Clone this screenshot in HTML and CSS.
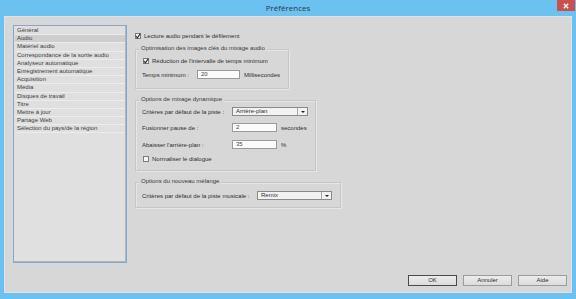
FILE: index.html
```html
<!DOCTYPE html>
<html lang="fr">
<head>
<meta charset="utf-8">
<title>Préférences</title>
<link rel="stylesheet" href="styles.css">
</head>
<body>
<div class="window">
  <div class="titlebar">
    <span class="title">Préférences</span>
    <span class="close"><svg width="6" height="6" viewBox="0 0 6 6"><path d="M0.8 0.8 L5.2 5.2 M5.2 0.8 L0.8 5.2" stroke="#fff" stroke-width="1.3"/></svg></span>
  </div>
  <div class="client">
    <div class="main">
      <ul class="nav">
        <li>Général</li>
        <li class="sel">Audio</li>
        <li>Matériel audio</li>
        <li>Correspondance de la sortie audio</li>
        <li>Analyseur automatique</li>
        <li>Enregistrement automatique</li>
        <li>Acquisition</li>
        <li>Média</li>
        <li>Disques de travail</li>
        <li>Titre</li>
        <li>Mettre à jour</li>
        <li>Partage Web</li>
        <li>Sélection du pays/de la région</li>
      </ul>
      <div class="panel">
        <div class="check top-check"><span class="box on"><svg width="6" height="6" viewBox="0 0 6 6"><path d="M0.8 3 L2.4 4.8 L5.3 0.8" fill="none" stroke="#222" stroke-width="1.1"/></svg></span>Lecture audio pendant le défilement</div>

        <div class="group g1">
          <div class="legend">Optimisation des images clés du mixage audio</div>
          <div class="check r1"><span class="box on"><svg width="6" height="6" viewBox="0 0 6 6"><path d="M0.8 3 L2.4 4.8 L5.3 0.8" fill="none" stroke="#222" stroke-width="1.1"/></svg></span>Réduction de l'intervalle de temps minimum</div>
          <div class="row r2"><span class="lbl l1">Temps minimum :</span><span class="input w43">20</span><span class="unit">Millisecondes</span></div>
        </div>

        <div class="group g2">
          <div class="legend">Options de mixage dynamique</div>
          <div class="row r-sel"><span class="lbl l2">Critères par défaut de la piste :</span><span class="select w76"><span class="val">Arrière-plan</span><span class="arrow"></span></span></div>
          <div class="row r-in1"><span class="lbl l2">Fusionner pause de :</span><span class="input w45">2</span><span class="unit">secondes</span></div>
          <div class="row r-in2"><span class="lbl l2">Abaisser l'arrière-plan :</span><span class="input w45">35</span><span class="unit">%</span></div>
          <div class="check r-chk"><span class="box"></span>Normaliser le dialogue</div>
        </div>

        <div class="group g3">
          <div class="legend">Options du nouveau mélange</div>
          <div class="row r-sel3"><span class="lbl l3">Critères par défaut de la piste musicale :</span><span class="select w75"><span class="val">Remix</span><span class="arrow"></span></span></div>
        </div>
      </div>
    </div>
    <div class="footer">
      <button class="btn default">OK</button>
      <button class="btn">Annuler</button>
      <button class="btn">Aide</button>
    </div>
  </div>
</div>
</body>
</html>
```

FILE: styles.css
```css
* { box-sizing: border-box; }
html, body { margin: 0; padding: 0; }
body {
  width: 576px;
  height: 299px;
  overflow: hidden;
  font-family: "Liberation Sans", Arial, sans-serif;
  font-size: 6px;
  color: #2e2e2e;
  background: #6bc1ef;
}
.window {
  width: 576px;
  height: 299px;
  background: #6bc1ef;
  display: flex;
  flex-direction: column;
}
.titlebar {
  height: 16px;
  position: relative;
  display: flex;
  align-items: center;
  justify-content: center;
}
.title {
  font-family: "Open Sans", "Liberation Sans", sans-serif;
  font-size: 8px;
  color: #2e3a44;
  margin-top: -1px;
}
.close {
  position: absolute;
  right: 1px;
  top: 0;
  width: 18px;
  height: 11px;
  background: #c9504f;
  display: flex;
  align-items: center;
  justify-content: center;
}
.close svg { display: block; }
.client {
  margin: 0 4px;
  height: 277px;
  background: #d7d7d7;
  border: 1px solid #e1e1e1;
  padding: 8px 4px 0 8px;
  display: flex;
  flex-direction: column;
}
.main {
  height: 238px;
  display: flex;
  gap: 8px;
}
.nav {
  list-style: none;
  margin: 0;
  padding: 1px 1px;
  width: 114px;
  height: 238px;
  background: #e0e0e0;
  border: 1px solid #7fa9d2;
  box-shadow: inset -1px -1px 0 #b4b4b4;
}
.nav li {
  height: 8.2px;
  line-height: 7.6px;
  padding-left: 2px;
  border-bottom: 1px solid #ececec;
  background: #dfdfdf;
  white-space: nowrap;
  color: #3c3c3c;
}
.nav li.sel { background: #cecece; }
.panel {
  display: flex;
  flex-direction: column;
  align-items: flex-start;
}
.check {
  height: 9px;
  display: flex;
  align-items: center;
  white-space: nowrap;
}
.box {
  width: 6px;
  height: 6px;
  border: 1px solid #7c7c7c;
  background: #f6f6f6;
  margin-right: 3px;
  display: inline-flex;
  align-items: center;
  justify-content: center;
  flex: none;
}
.box svg { display: block; margin: -1px; }
.top-check { margin-top: 6px; }
.group {
  border: 1px solid #c6c6c6;
  box-shadow: 1px 1px 0 #e6e6e6, inset 1px 1px 0 #e6e6e6;
  padding: 0 0 0 6px;
}
.legend {
  height: 8px;
  line-height: 8px;
  margin-top: -6px;
  margin-left: -3px;
  padding: 0 2px;
  background: #d7d7d7;
  width: fit-content;
  white-space: nowrap;
  color: #383838;
}
.g1 { margin-top: 9px; width: 154px; padding-bottom: 9px; }
.g1 .r1 { margin-top: 4px; margin-left: 1px; }
.g1 .r2 { margin-top: 5px; }
.g2 { margin-top: 11px; width: 181px; padding-bottom: 7px; }
.g2 .r-sel { margin-top: 4px; }
.g2 .r-in1 { margin-top: 7px; }
.g2 .r-in2 { margin-top: 8px; }
.g2 .r-chk { margin-top: 5px; margin-left: 1px; }
.g3 { margin-top: 11px; width: 206px; padding-bottom: 7px; }
.g3 .r-sel3 { margin-top: 6px; }
.row {
  height: 9px;
  display: flex;
  align-items: center;
  white-space: nowrap;
}
.lbl { flex: none; }
.l1 { width: 55px; }
.l2 { width: 90px; }
.l3 { width: 115px; }
.input {
  height: 9px;
  line-height: 7px;
  background: #fbfbfb;
  border: 1px solid #9a9a9a;
  padding-left: 3px;
  color: #444;
  flex: none;
}
.w43 { width: 43px; }
.w45 { width: 45px; }
.unit { margin-left: 4px; }
.select {
  height: 9px;
  display: flex;
  background: #f2f2f2;
  border: 1px solid #8a8a8a;
  flex: none;
}
.w76 { width: 76px; }
.w75 { width: 75px; }
.select .val {
  flex: 1;
  line-height: 7px;
  padding-left: 3px;
  color: #2e2e2e;
}
.select .arrow {
  width: 10px;
  border-left: 1px solid #a8a8a8;
  position: relative;
}
.select .arrow::after {
  content: "";
  position: absolute;
  left: 3px;
  top: 2.5px;
  border-left: 2px solid transparent;
  border-right: 2px solid transparent;
  border-top: 2px solid #222;
}
.footer {
  margin-top: 12px;
  display: flex;
  justify-content: flex-end;
  gap: 6px;
}
.btn {
  width: 49px;
  height: 11px;
  padding: 0;
  font-family: "Liberation Sans", Arial, sans-serif;
  font-size: 6px;
  color: #2e2e2e;
  background: linear-gradient(#ececec, #dcdcdc);
  border: 1px solid #9c9c9c;
  border-radius: 0;
  line-height: 9px;
}
.btn.default {
  border-color: #4a4a4a;
}
```
